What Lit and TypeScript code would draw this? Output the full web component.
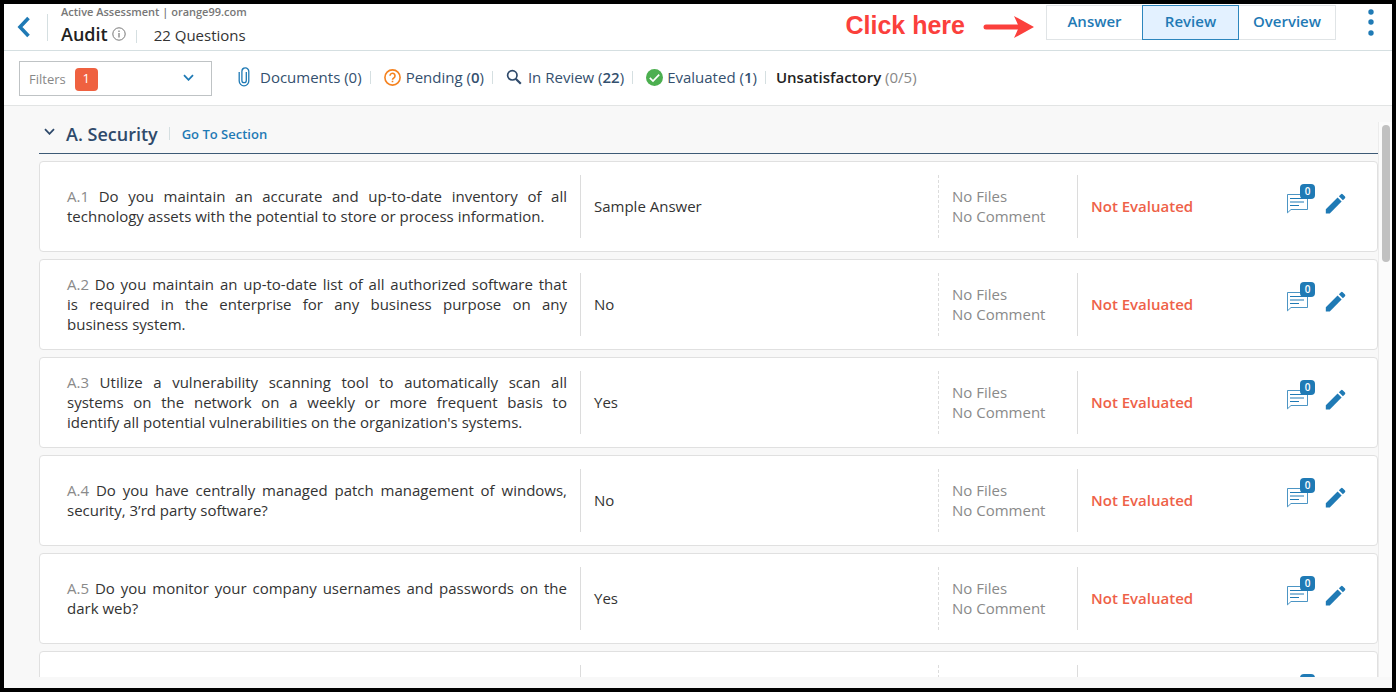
import { LitElement, html, css, svg } from "lit";
import { customElement, property } from "lit/decorators.js";

interface Question {
  code: string;
  text: string;
  answer: string;
}

const QUESTIONS: Question[] = [
  { code: "A.1", text: "Do you maintain an accurate and up-to-date inventory of all technology assets with the potential to store or process information.", answer: "Sample Answer" },
  { code: "A.2", text: "Do you maintain an up-to-date list of all authorized software that is\u00a0required in the enterprise for any business purpose on any business\u00a0system.", answer: "No" },
  { code: "A.3", text: "Utilize a vulnerability scanning tool to automatically scan all systems on the network on a weekly or more frequent basis to identify\u00a0all potential vulnerabilities on the organization's systems.", answer: "Yes" },
  { code: "A.4", text: "Do you have centrally managed patch management of windows, security, 3’rd party software?", answer: "No" },
  { code: "A.5", text: "Do you monitor your company usernames and passwords on the dark web?", answer: "Yes" },
];

const chevron = svg`<path d="M1 1.2 5.5 5.8 10 1.2" fill="none" stroke="currentColor" stroke-width="1.8"/>`;

@customElement("question-row")
class QuestionRow extends LitElement {
  @property({ attribute: false }) item?: Question;

  static styles = css`
    :host {
      display: grid;
      flex: none;
      grid-template-columns: minmax(0, 540fr) minmax(0, 358fr) minmax(0, 139fr) minmax(0, 300fr);
      min-height: 91px;
      box-sizing: border-box;
      padding: 13px 0;
      background: #fff;
      border: 1px solid #e0e0e0;
      border-radius: 4px;
    }
    .cell {
      display: flex;
      flex-direction: column;
      justify-content: center;
      box-sizing: border-box;
      padding: 0 0 2px 13px;
      border-left: 1px solid #dcdcdc;
    }
    .question {
      padding-left: 27px;
      padding-right: 13px;
      border-left: none;
    }
    .question p {
      margin: 0;
      text-align: justify;
    }
    .code, .files { color: #8a8a8a; }
    .files { border-left-style: dashed; }
    .status {
      flex-direction: row;
      align-items: center;
      justify-content: space-between;
      padding-right: 31px;
      color: #ee6148;
      font-weight: 600;
    }
    .actions {
      display: flex;
      align-items: flex-end;
      gap: 11px;
      padding-bottom: 4px;
    }
    button {
      position: relative;
      display: block;
      padding: 0;
      border: none;
      background: none;
      color: #1f7ab5;
      font: inherit;
      cursor: pointer;
    }
    svg { display: block; }
    .count {
      position: absolute;
      left: 14px;
      top: -9px;
      width: 15px;
      height: 15px;
      border-radius: 4px;
      background: #1f7ab5;
      color: #fff;
      font-size: 10px;
      line-height: 15px;
      text-align: center;
    }
  `;

  render() {
    const q = this.item;
    if (!q) {
      return html`
        <div class="cell question"></div>
        <div class="cell"></div>
        <div class="cell files"></div>
        <div class="cell status"><span></span>${this.actions("")}</div>`;
    }
    return html`
      <div class="cell question"><p><span class="code">${q.code}</span> ${q.text}</p></div>
      <div class="cell">${q.answer}</div>
      <div class="cell files"><span>No Files</span><span>No Comment</span></div>
      <div class="cell status"><span>Not Evaluated</span>${this.actions("0")}</div>`;
  }

  private actions(count: string) {
    return html`
      <div class="actions">
        <button type="button" aria-label="Comments">
          <svg width="28" height="21" viewBox="0 0 28 21" fill="none" stroke="currentColor">
            <path d="M1.500 19.800V1.500H21.500V16.500H5Z" stroke-width="1" stroke-opacity="0.800"/>
            <path d="M4 5.500H18M4 9H18M4 12.500H13" stroke-width="1.200"/>
          </svg>
          <span class="count">${count}</span>
        </button>
        <button type="button" aria-label="Edit">
          <svg width="21" height="21" viewBox="0 0 21 21" fill="currentColor">
            <path d="M0.800 20.500V16.200L12.600 4.600 16.600 8.600 4.800 20.500Z"/>
            <path d="M13.900 3.300 16 1.200Q16.800 0.400 17.700 1.200L20 3.500Q20.700 4.300 20 5.200L17.900 7.300Z"/>
          </svg>
        </button>
      </div>`;
  }
}

@customElement("app-root")
class AppRoot extends LitElement {
  static styles = css`
    :host {
      display: flex;
      flex-direction: column;
      height: 100vh;
      box-sizing: border-box;
      border: 4px solid #000;
      overflow: hidden;
      background: #f8f8f8;
      color: #333;
      font: 15px/20px "Open Sans", "Noto Sans", sans-serif;
    }
    svg { display: block; flex: none; }
    button { font: inherit; cursor: pointer; }
    .header {
      display: flex;
      align-items: center;
      box-sizing: border-box;
      height: 47px;
      padding: 0 18px 0 13px;
      background: #fff;
      border-bottom: 1px solid #d5dfe1;
    }
    .icon-button {
      padding: 0;
      border: none;
      background: none;
      color: #1f7ab5;
    }
    .rule { width: 1px; flex: none; background: #d5dfe1; }
    .rule.tall { height: 27px; margin: 0 13px 0 16px; }
    .rule.short { height: 13px; }
    .titles { display: flex; flex-direction: column; height: 46px; }
    .crumb {
      color: #777;
      font-size: 11px;
      line-height: 16px;
      font-weight: 600;
    }
    .title-row { display: flex; align-items: center; }
    h1 {
      margin: 0 4px 0 0;
      color: #222;
      font-size: 18px;
      line-height: 28px;
      font-weight: 600;
    }
    .title-row .rule { margin: 4px 17px 0 10px; }
    .total { padding-top: 2px; }
    .hint {
      display: flex;
      align-items: center;
      gap: 18px;
      margin: 0 12px 4px auto;
      color: #fb403c;
      font: bold 25px/30px "Liberation Sans", Arial, sans-serif;
    }
    .tabs {
      display: flex;
      align-self: flex-start;
      margin-top: 1px;
    }
    .tab {
      box-sizing: border-box;
      width: 97px;
      height: 35px;
      padding: 0 0 4px;
      border: 1px solid #e0e4e6;
      background: #fff;
      color: #1f7ab5;
      font-weight: 600;
    }
    .tab.first { border-right: none; width: 96px; }
    .tab.last { border-left: none; }
    .tab.active { background: #e3f1ff; border-color: #2d86bd; }
    .more { margin-left: 32px; padding-bottom: 10px; }
    .toolbar {
      display: flex;
      align-items: center;
      box-sizing: border-box;
      height: 55px;
      padding: 0 15px;
      background: #fff;
      border-bottom: 1px solid #e2e4e4;
      white-space: nowrap;
    }
    .filters {
      display: flex;
      align-items: center;
      box-sizing: border-box;
      width: 193px;
      height: 35px;
      margin-right: 26px;
      padding: 2px 17px 0 9px;
      border: 1px solid #bfc3c5;
      background: #fff;
      color: #888;
      font-size: 13px;
    }
    .badge {
      width: 23px;
      height: 23px;
      margin-left: 9px;
      border-radius: 4px;
      background: #ef6140;
      color: #fff;
      line-height: 21px;
      text-align: center;
    }
    .filters svg { margin-left: auto; margin-bottom: 3px; color: #1f7ab5; }
    .stat {
      display: flex;
      align-items: center;
      padding-bottom: 2px;
      color: #34506e;
      text-decoration: none;
    }
    .stat.docs { gap: 10px; }
    .stat.pending { gap: 5px; }
    .stat.review { gap: 6px; }
    .stat.evaluated { gap: 4px; }
    .stat b, .unsat b { font-weight: 600; }
    .toolbar .rule { margin: 0 13px 2px 8px; }
    .unsat { padding-bottom: 2px; color: #888; }
    .toolbar .rule.end { margin-right: 10px; }
    .unsat b { color: #222; }
    .body {
      display: flex;
      flex: 1;
      min-height: 0;
      margin: 16px 0 11px;
    }
    .list {
      display: flex;
      flex-direction: column;
      flex: 1;
      min-width: 0;
      gap: 7px;
      margin-left: 35px;
      overflow: hidden;
    }
    .section {
      display: flex;
      align-items: center;
      flex: none;
      box-sizing: border-box;
      height: 32px;
      padding: 0 0 8px 5px;
      border-bottom: 1px solid #3d5a76;
    }
    h2 {
      margin: 0 11px;
      color: #2f4a6b;
      font-size: 18px;
      line-height: 24px;
      font-weight: 600;
    }
    .section .toggle { color: #2f4a6b; padding-bottom: 4px; }
    .section .rule { margin-right: 12px; }
    .section a {
      color: #1f7ab5;
      font-size: 13px;
      font-weight: 600;
      text-decoration: none;
    }
    .track {
      flex: none;
      box-sizing: border-box;
      width: 14px;
      padding: 3px 3px;
      border-left: 1px solid #ececec;
      background: #fbfbfb;
    }
    .thumb { width: 8px; height: 137px; border-radius: 4px; background: #c1c1c1; }
  `;

  render() {
    return html`
      <header class="header">
        <button class="icon-button" type="button" aria-label="Back">
          <svg width="14" height="22" viewBox="0 0 14 22"><path d="M11.500 2 3 11 11.500 20" fill="none" stroke="currentColor" stroke-width="3.600"/></svg>
        </button>
        <span class="rule tall"></span>
        <div class="titles">
          <span class="crumb">Active Assessment | orange99.com</span>
          <div class="title-row">
            <h1>Audit</h1>
            <svg width="14" height="14" viewBox="0 0 14 14" fill="none" stroke="#777">
              <circle cx="7" cy="7" r="6.200"/><path d="M7 6V10.500M7 3.500V4.900" stroke-width="1.200"/>
            </svg>
            <span class="rule short"></span>
            <span class="total">22 Questions</span>
          </div>
        </div>
        <div class="hint">
          <span>Click here</span>
          <svg width="51" height="26" viewBox="0 0 51 26">
            <path d="M3 15H36" stroke="currentColor" stroke-width="5" stroke-linecap="round"/>
            <path d="M31 4 51 15 31 26 36 15Z" fill="currentColor"/>
          </svg>
        </div>
        <nav class="tabs" aria-label="View">
          <button class="tab first" type="button">Answer</button>
          <button class="tab active" type="button" aria-current="page">Review</button>
          <button class="tab last" type="button">Overview</button>
        </nav>
        <button class="icon-button more" type="button" aria-label="More options">
          <svg width="6" height="28" viewBox="0 0 6 28" fill="currentColor">
            <circle cx="3" cy="4" r="2.700"/><circle cx="3" cy="14" r="2.700"/><circle cx="3" cy="25" r="2.700"/>
          </svg>
        </button>
      </header>
      <div class="toolbar">
        <button class="filters" type="button" aria-haspopup="listbox">
          <span>Filters</span><span class="badge">1</span>
          <svg width="11" height="7" viewBox="0 0 11 7">${chevron}</svg>
        </button>
        <a class="stat docs" href="#documents">
          <svg width="12" height="20" viewBox="0 0 12 20" fill="none" stroke="#1f7ab5" stroke-width="1.300">
            <path d="M8.300 5V13.500a2.200 2.200 0 0 1-4.400 0V4.400a3.300 3.300 0 0 1 6.900 0V14a4.700 4.700 0 0 1-9.600 0V5"/>
          </svg>
          <span>Documents (0)</span>
        </a>
        <span class="rule short"></span>
        <a class="stat pending" href="#pending">
          <svg width="17" height="17" viewBox="0 0 17 17" fill="none" stroke="#f5821f" stroke-width="1.600">
            <circle cx="8.500" cy="8.500" r="7.600"/>
            <path d="M6 6.800a2.500 2.500 0 1 1 4 2C9 9.500 8.500 9.800 8.500 10.700M8.500 11.800V13.300"/>
          </svg>
          <span>Pending (<b>0</b>)</span>
        </a>
        <span class="rule short"></span>
        <a class="stat review" href="#in-review">
          <svg width="16" height="16" viewBox="0 0 16 16" fill="none" stroke="#2f4a6b">
            <circle cx="6.300" cy="6.300" r="4.700" stroke-width="1.700"/><path d="M9.700 9.700 14.800 14.800" stroke-width="2.200"/>
          </svg>
          <span>In Review (<b>22</b>)</span>
        </a>
        <span class="rule short"></span>
        <a class="stat evaluated" href="#evaluated">
          <svg width="17" height="17" viewBox="0 0 17 17">
            <circle cx="8.500" cy="8.500" r="8.500" fill="#4caf50"/>
            <path d="M3.800 8.800 7 12 13.200 5.600" fill="none" stroke="#fff" stroke-width="1.700"/>
          </svg>
          <span>Evaluated (<b>1</b>)</span>
        </a>
        <span class="rule short end"></span>
        <span class="unsat"><b>Unsatisfactory</b> (0/5)</span>
      </div>
      <main class="body">
        <div class="list">
          <div class="section">
            <button class="icon-button toggle" type="button" aria-label="Collapse section">
              <svg width="11" height="7" viewBox="0 0 11 7">${chevron}</svg>
            </button>
            <h2>A. Security</h2>
            <span class="rule short"></span>
            <a href="#security">Go To Section</a>
          </div>
          ${QUESTIONS.map((q) => html`<question-row .item=${q}></question-row>`)}
          <question-row></question-row>
        </div>
        <div class="track"><div class="thumb"></div></div>
      </main>
    `;
  }
}
